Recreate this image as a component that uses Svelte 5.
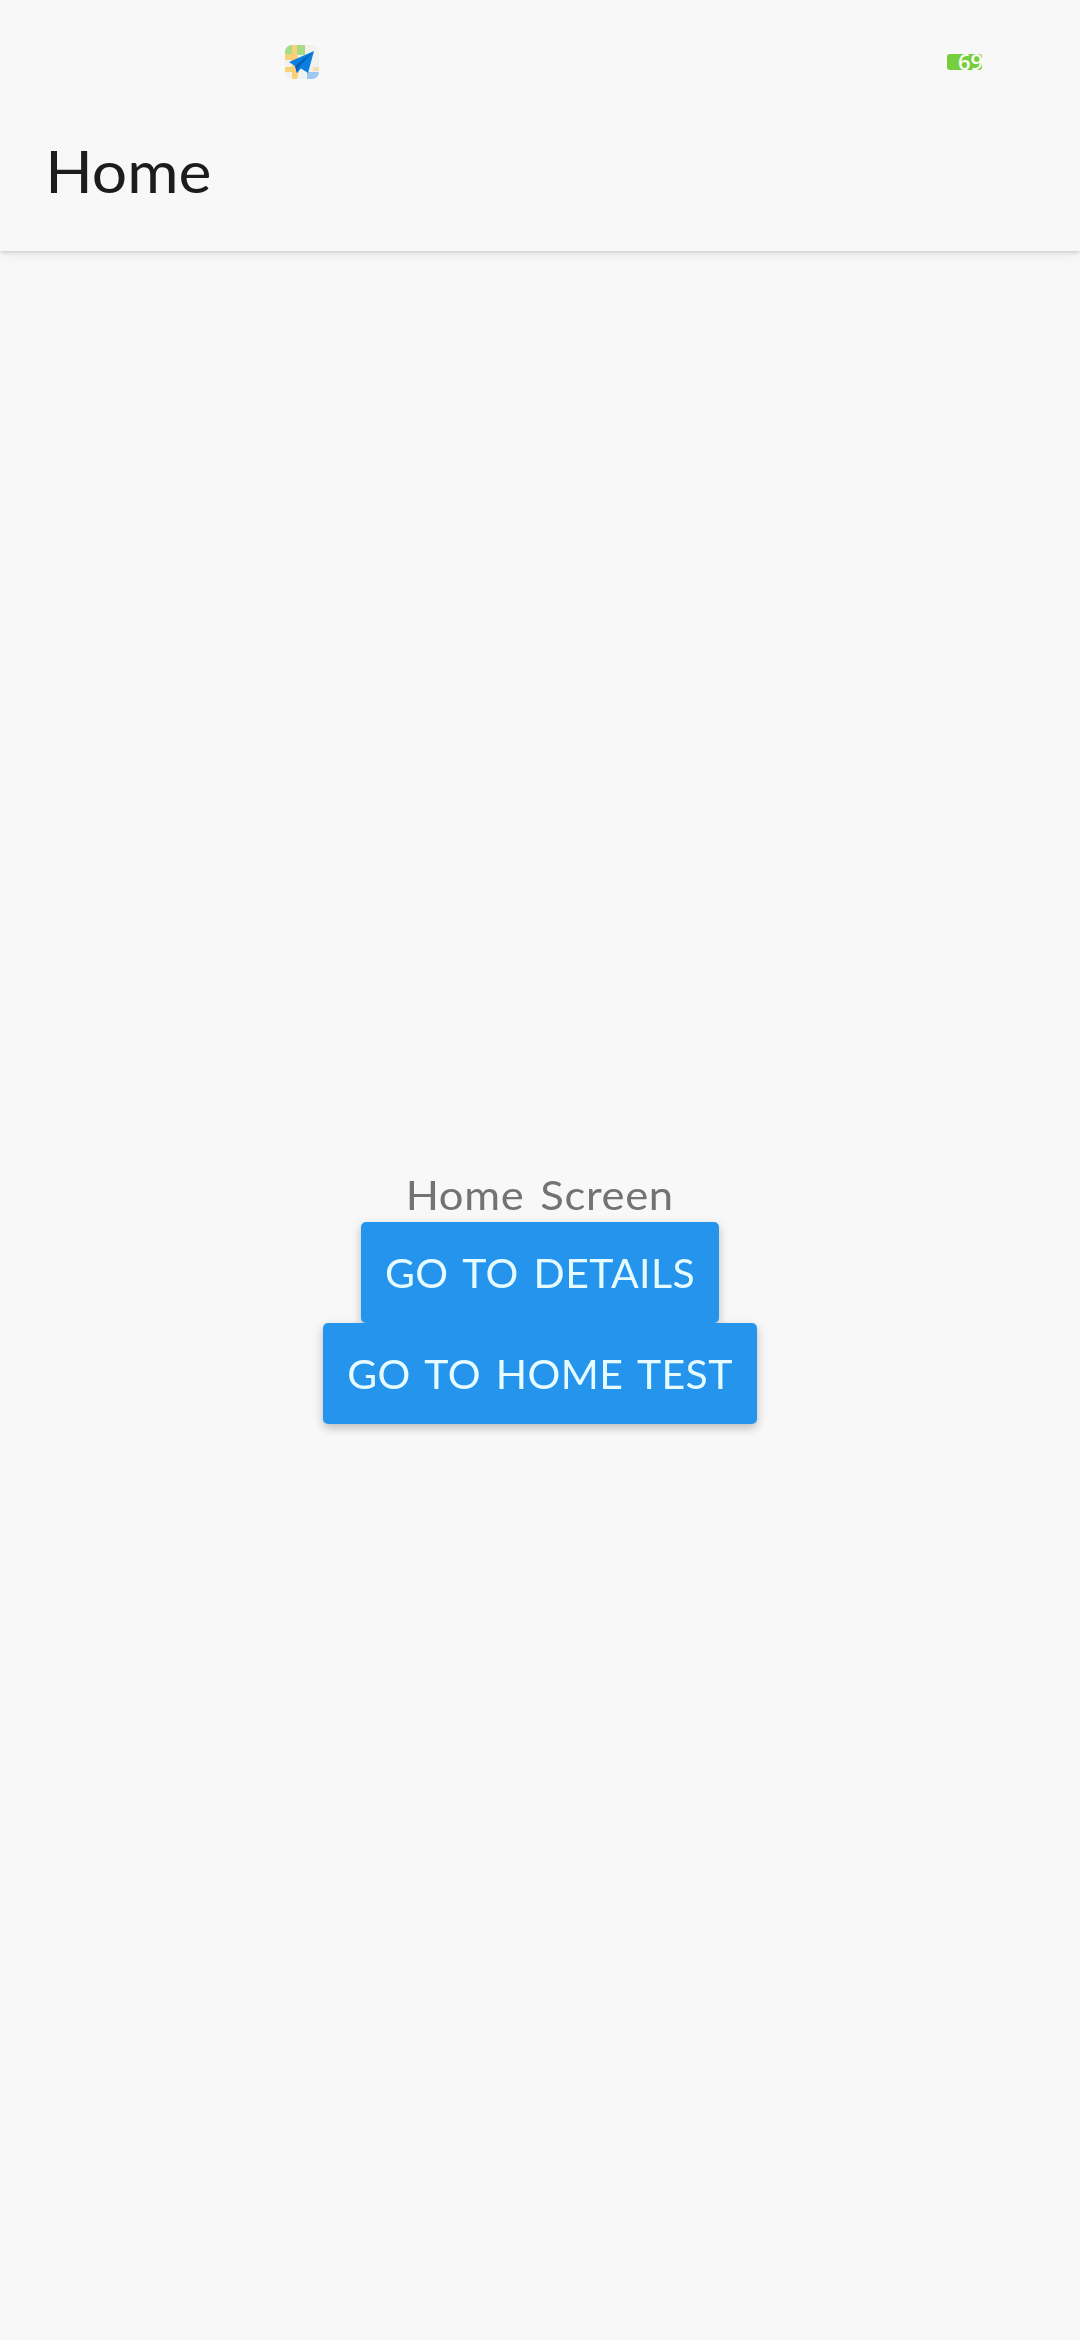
<script>
  const actions = [
    { id: 'details', label: 'GO TO DETAILS' },
    { id: 'test', label: 'GO TO HOME TEST' },
  ];
</script>

<div class="screen">
  <header>
    <div class="status">
      <svg class="map" viewBox="0 0 34 34" aria-hidden="true">
        <defs><clipPath id="tile"><rect width="34" height="34" rx="7" /></clipPath></defs>
        <g clip-path="url(#tile)">
          <rect width="34" height="34" fill="#f1f2f0" />
          <path d="M0 0h20v10H0z" fill="#a5dc84" />
          <path d="M7 0h5v9l3 8-3 17H7V15H0V9h7z" fill="#fad078" />
          <path d="M0 22h12v5H0z" fill="#fad078" />
          <path d="M22 27h12v7H22z" fill="#9cc8f3" />
          <path d="M28 22h6v4h-6z" fill="#f3dfad" />
        </g>
        <path d="M29 6 4 17l6 4 2 7 4-4.500 7 4.500z" fill="#0b7fdf" />
        <path d="M29 6 10 21l2 7 2-6z" fill="#0761b9" />
      </svg>
      <div class="battery"><span>69</span></div>
    </div>
    <h1>Home</h1>
  </header>
  <main>
    <p>Home Screen</p>
    <div class="actions">
      {#each actions as action (action.id)}
        <button class={action.id}>{action.label}</button>
      {/each}
    </div>
  </main>
</div>

<style>
  :global(body) { background: #f8f8f8; }
  .screen {
    width: 1080px;
    height: 2340px;
    display: flex;
    flex-direction: column;
    overflow: hidden;
    background: #f8f8f8;
    font-family: Lato, "Liberation Sans", sans-serif;
  }
  header {
    height: 251px;
    flex: none;
    background: #f8f8f8;
    box-shadow: 0 1px 4px rgba(0, 0, 0, .17), 0 4px 12px rgba(0, 0, 0, .06);
  }
  .status {
    height: 95px;
    box-sizing: border-box;
    padding: 45px 98px 0 285px;
    display: flex;
    justify-content: space-between;
  }
  .map { width: 34px; height: 34px; }
  .battery {
    width: 35px;
    height: 16px;
    margin-top: 9px;
    border-radius: 3px;
    background: #76cd3e;
    color: #fafef5;
    font: 600 22px/15px "Open Sans", sans-serif;
  }
  .battery span { display: block; padding-left: 11px; }
  h1 {
    margin: 0;
    padding: 41px 0 0 42px;
    font-size: 58px;
    line-height: 70px;
    font-weight: 400;
    color: #1c1c1e;
    transform: scaleX(1.075);
    transform-origin: left;
  }
  main {
    flex: 1;
    display: flex;
    flex-direction: column;
    align-items: center;
    padding-top: 918px;
  }
  p {
    margin: 0;
    height: 53px;
    font-size: 40.500px;
    line-height: 52px;
    letter-spacing: .6px;
    word-spacing: 4px;
    color: #737373;
    white-space: nowrap;
    transform: scaleX(1.075);
  }
  .actions {
    display: flex;
    flex-direction: column;
    align-items: center;
    filter: drop-shadow(0 4px 5px rgba(0, 0, 0, .24));
  }
  button {
    height: 101px;
    flex: none;
    padding: 0;
    border: 0;
    border-radius: 5px;
    background: #2494ed;
    color: #e6fbff;
    font: 400 41px/101px Lato, "Liberation Sans", sans-serif;
    letter-spacing: .4px;
    word-spacing: 4px;
    white-space: nowrap;
  }
  .details { width: 358px; }
  .test { width: 434px; }
</style>
